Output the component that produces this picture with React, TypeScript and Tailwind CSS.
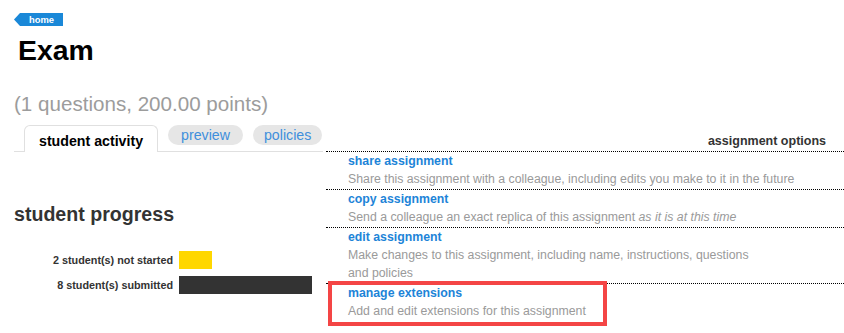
import React from "react";

const font = { fontFamily: '"Liberation Sans", Arial, sans-serif' };

function Option({
  title,
  children,
  last,
  highlight,
}: {
  title: string;
  children: React.ReactNode;
  last?: boolean;
  highlight?: boolean;
}) {
  return (
    <div
      className={
        "relative pl-[22px] pb-[1px] " +
        (last ? "" : "border-b border-dotted border-black")
      }
    >
      <div className="text-[12.3px] leading-[18px] font-bold text-[#1d84d8]">{title}</div>
      <div className="text-[12.3px] leading-[18px] text-[#9a9a9a]">{children}</div>
      {highlight && (
        <div className="absolute left-[2px] top-[-3px] w-[279px] h-[45px] border-[4px] border-[#f44545]" />
      )}
    </div>
  );
}

export default function App() {
  return (
    <div className="w-[844px] h-[333px] bg-white overflow-hidden" style={font}>
      <div className="pl-[14px] pt-[13px]">
        <div className="w-[49px] h-[13px] bg-[#1a88d8] [clip-path:polygon(6px_0,100%_0,100%_100%,6px_100%,0_50%)] flex items-center justify-center pl-[6px]">
          <span className="text-[9.4px] leading-[13px] font-bold text-white">home</span>
        </div>
        <h1 className="ml-[4px] mt-[8px] text-[28.4px] leading-[32px] font-bold text-black">Exam</h1>
        <div className="mt-[26px] text-[20.6px] leading-[24px] text-[#9c9c9c]">
          (1 questions, 200.00 points)
        </div>
      </div>

      <div className="flex pl-[14px] mt-[9px]">
        {/* left column */}
        <div className="w-[309px] shrink-0">
          <div className="flex items-start h-[27px] border-b border-[#e0e0e0]">
            <div className="ml-[10px] h-[27px] px-[14px] bg-white border border-b-0 border-[#e0e0e0] rounded-t-[6px] flex items-center">
              <span className="text-[14.2px] leading-[18px] font-bold text-black pt-[4px]">
                student activity
              </span>
            </div>
            <div className="ml-[10px] h-[20px] px-[13px] rounded-full bg-[#e6e6e6] flex items-center">
              <span className="text-[14.2px] leading-[18px] text-[#3f8fdc]">preview</span>
            </div>
            <div className="ml-[10px] h-[20px] px-[11px] rounded-full bg-[#e6e6e6] flex items-center">
              <span className="text-[14.2px] leading-[18px] text-[#3f8fdc]">policies</span>
            </div>
          </div>

          <h2 className="mt-[50px] text-[19.6px] leading-[24px] font-bold text-[#333]">
            student progress
          </h2>

          <div className="mt-[25px] flex flex-col gap-[7px]">
            <div className="flex items-center gap-[6px]">
              <div className="w-[159px] text-right text-[10.8px] leading-[18px] font-bold text-[#333]">
                2 student(s) not started
              </div>
              <div className="h-[18px] w-[33px] bg-[#ffd700]" />
            </div>
            <div className="flex items-center gap-[6px]">
              <div className="w-[159px] text-right text-[10.8px] leading-[18px] font-bold text-[#333]">
                8 student(s) submitted
              </div>
              <div className="h-[18px] w-[133px] bg-[#333333]" />
            </div>
          </div>
        </div>

        {/* right column */}
        <div className="ml-[3px] flex-1">
          <div className="h-[27px] pt-[3px] pr-[18px] text-right border-b border-dotted border-black">
            <span className="text-[12.5px] leading-[16px] font-bold text-[#333]">
              assignment options
            </span>
          </div>
          <Option title="share assignment">
            Share this assignment with a colleague, including edits you make to it in the future
          </Option>
          <Option title="copy assignment">
            Send a colleague an exact replica of this assignment <i>as it is at this time</i>
          </Option>
          <Option title="edit assignment">
            Make changes to this assignment, including name, instructions, questions
            <br />
            and policies
          </Option>
          <Option title="manage extensions" last highlight>
            Add and edit extensions for this assignment
          </Option>
        </div>
      </div>
    </div>
  );
}
